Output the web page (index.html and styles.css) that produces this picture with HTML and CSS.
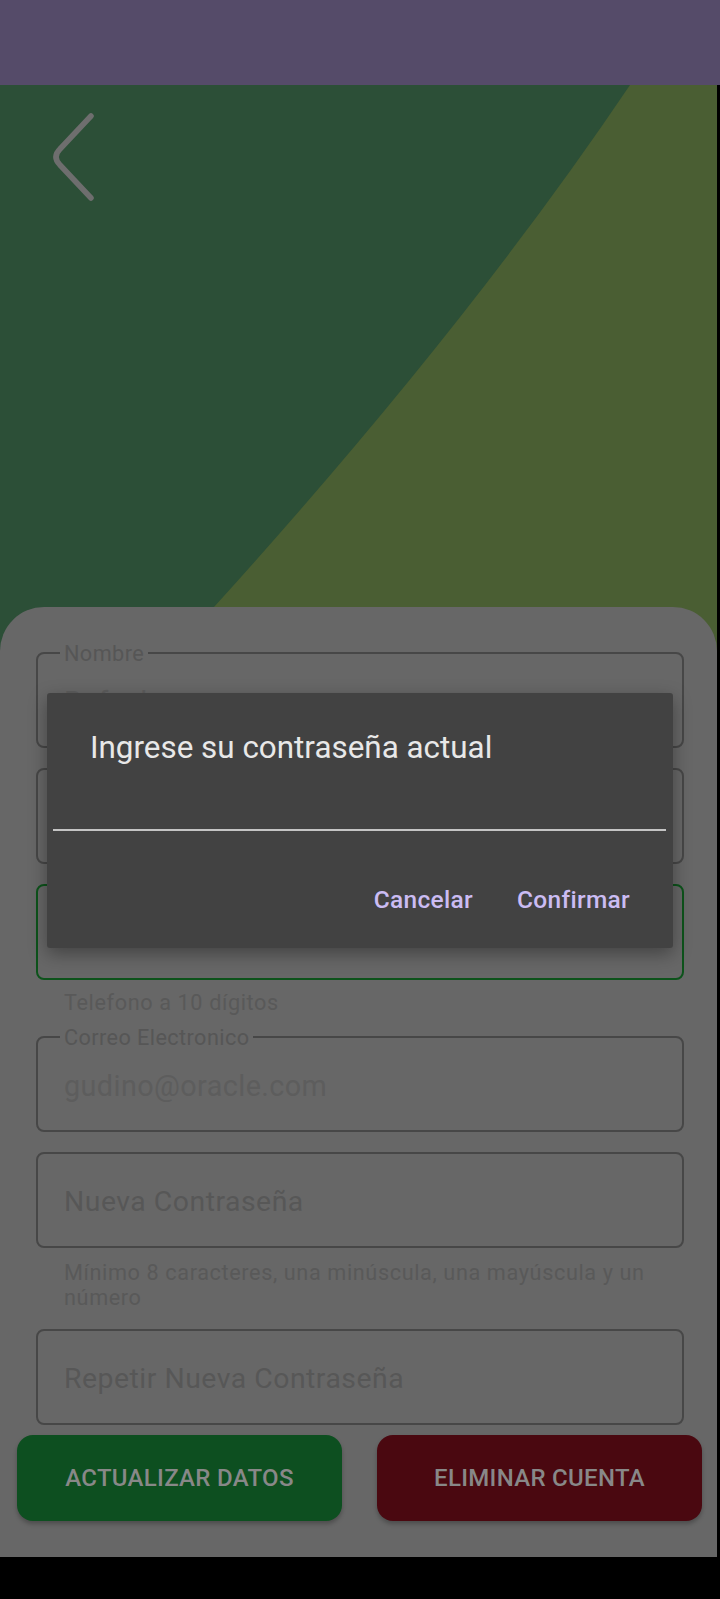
FILE: index.html
```html
<!DOCTYPE html>
<html lang="es">
<head>
<meta charset="utf-8">
<title>Editar perfil</title>
<link rel="stylesheet" href="styles.css">
</head>
<body>
<div class="phone">
  <div class="status"></div>
  <div class="app">
    <svg class="bg" width="717" height="1472" viewBox="0 0 717 1472" aria-hidden="true">
      <rect x="0" y="0" width="717" height="1472" fill="#2c4f37"/>
      <path d="M630 0 Q 465 245 214 522 L 0 750 L 0 1472 L 717 1472 L 717 0 Z" fill="#4a5e33"/>
    </svg>
    <div class="topbar">
      <svg class="back" width="50" height="92" viewBox="0 0 50 92" aria-label="Volver">
        <path d="M42 5 L11 38 Q3 46 11 54 L42 87" fill="none" stroke="#6e6e6e" stroke-width="5.5" stroke-linecap="round" stroke-linejoin="round"/>
      </svg>
    </div>
    <div class="card">
      <div class="form">
        <div class="field">
          <span class="field-label">Nombre</span>
          <span class="value">Rafael</span>
        </div>
        <div class="field gap">
          <span class="field-label">Apellido</span>
        </div>
        <div class="field gap focus">
          <span class="field-label">Telefono</span>
        </div>
        <div class="helper">Telefono a 10 dígitos</div>
        <div class="field after-helper">
          <span class="field-label">Correo Electronico</span>
          <span class="value">gudino@oracle.com</span>
        </div>
        <div class="field gap">
          <span class="placeholder">Nueva Contraseña</span>
        </div>
        <div class="helper two">Mínimo 8 caracteres, una minúscula, una mayúscula y un número</div>
        <div class="field after-helper2">
          <span class="placeholder">Repetir Nueva Contraseña</span>
        </div>
      </div>
      <div class="actions">
        <button class="btn btn-green">ACTUALIZAR DATOS</button>
        <button class="btn btn-red">ELIMINAR CUENTA</button>
      </div>
    </div>
    <div class="edge"></div>
  </div>
  <div class="navbar"></div>

  <div class="dialog" role="dialog">
    <div class="dialog-title">Ingrese su contraseña actual</div>
    <div class="dialog-input"></div>
    <div class="dialog-actions">
      <span class="dlg-btn">Cancelar</span>
      <span class="dlg-btn">Confirmar</span>
    </div>
  </div>
</div>
</body>
</html>
```

FILE: styles.css
```css
* { box-sizing: border-box; }
html, body { margin: 0; padding: 0; background: #000; }
body { font-family: Roboto, "Noto Sans", "Liberation Sans", sans-serif; }

.phone {
  width: 720px;
  height: 1599px;
  position: relative;
  display: flex;
  flex-direction: column;
  background: #000;
  overflow: hidden;
}

.status { height: 85px; background: #554b69; flex: none; }

.app {
  height: 1472px;
  width: 720px;
  flex: none;
  position: relative;
  display: flex;
  flex-direction: column;
  overflow: hidden;
}

.bg { position: absolute; left: 0; top: 0; }

.edge {
  position: absolute;
  right: 0; top: 0;
  width: 3px; height: 100%;
  background: #000;
}

.topbar {
  position: relative;
  padding: 26px 0 0 49px;
  height: 130px;
}
.back { display: block; }

.card {
  position: relative;
  margin-top: auto;
  width: 717px;
  height: 950px;
  background: #676767;
  border-radius: 44px 44px 0 0;
  padding: 45px 0 36px;
  display: flex;
  flex-direction: column;
}

.form {
  padding: 0 33px 0 36px;
  display: flex;
  flex-direction: column;
}

.field {
  position: relative;
  height: 96px;
  border: 2px solid #474747;
  border-radius: 8px;
  display: flex;
  align-items: center;
  padding: 3px 0 0 26px;
}
.field.gap { margin-top: 20px; }
.field.after-helper { margin-top: 21px; }
.field.after-helper2 { margin-top: 19.5px; }
.field.focus { border-color: #0d531b; }

.field-label {
  position: absolute;
  left: 22px;
  top: -12px;
  padding: 0 4px;
  background: #676767;
  font-size: 21.7px;
  line-height: 24px;
  color: #565656;
  letter-spacing: 0.4px;
}

.value {
  font-size: 28.8px;
  color: #5d5d5d;
  letter-spacing: 0.4px;
}
.placeholder {
  font-size: 28.4px;
  color: #575757;
  letter-spacing: 0.5px;
}

.helper {
  margin-top: 11px;
  padding-left: 28px;
  padding-right: 30px;
  font-size: 21.7px;
  line-height: 24px;
  color: #595959;
  letter-spacing: 0.6px;
}
.helper.two { margin-top: 11.5px; line-height: 25px; }

.actions {
  margin-top: 10px;
  padding: 0 15px 0 17px;
  display: grid;
  grid-template-columns: 1fr 1fr;
  column-gap: 35px;
}

.btn {
  height: 86px;
  border: none;
  border-radius: 16px;
  font-family: Roboto, "Noto Sans", sans-serif;
  font-weight: 500;
  font-size: 24px;
  letter-spacing: 0.3px;
  color: #888888;
  box-shadow: 0 3px 4px rgba(0,0,0,0.25);
}
.btn-green { background: #0d4f20; }
.btn-red { background: #4a0810; }

.navbar { flex: 1; background: #000; }

.dialog {
  position: absolute;
  left: 47px;
  top: 693px;
  width: 626px;
  height: 255px;
  background: #424242;
  border-radius: 3px;
  box-shadow: 0 6px 18px rgba(0,0,0,0.35);
  padding: 36px 0 0;
  display: flex;
  flex-direction: column;
}

.dialog-title {
  padding-left: 43px;
  font-size: 31.4px;
  line-height: 37px;
  font-weight: 400;
  color: #e8e8e8;
}

.dialog-input {
  margin: 0 7px 0 6px;
  height: 65px;
  border-bottom: 2px solid #c4c4c4;
}

.dialog-actions {
  margin-top: 54px;
  padding-right: 43px;
  display: flex;
  justify-content: flex-end;
  gap: 44px;
}

.dlg-btn {
  font-size: 24.5px;
  line-height: 30px;
  font-weight: 500;
  color: #cbbcf3;
  letter-spacing: 0.3px;
}
```
